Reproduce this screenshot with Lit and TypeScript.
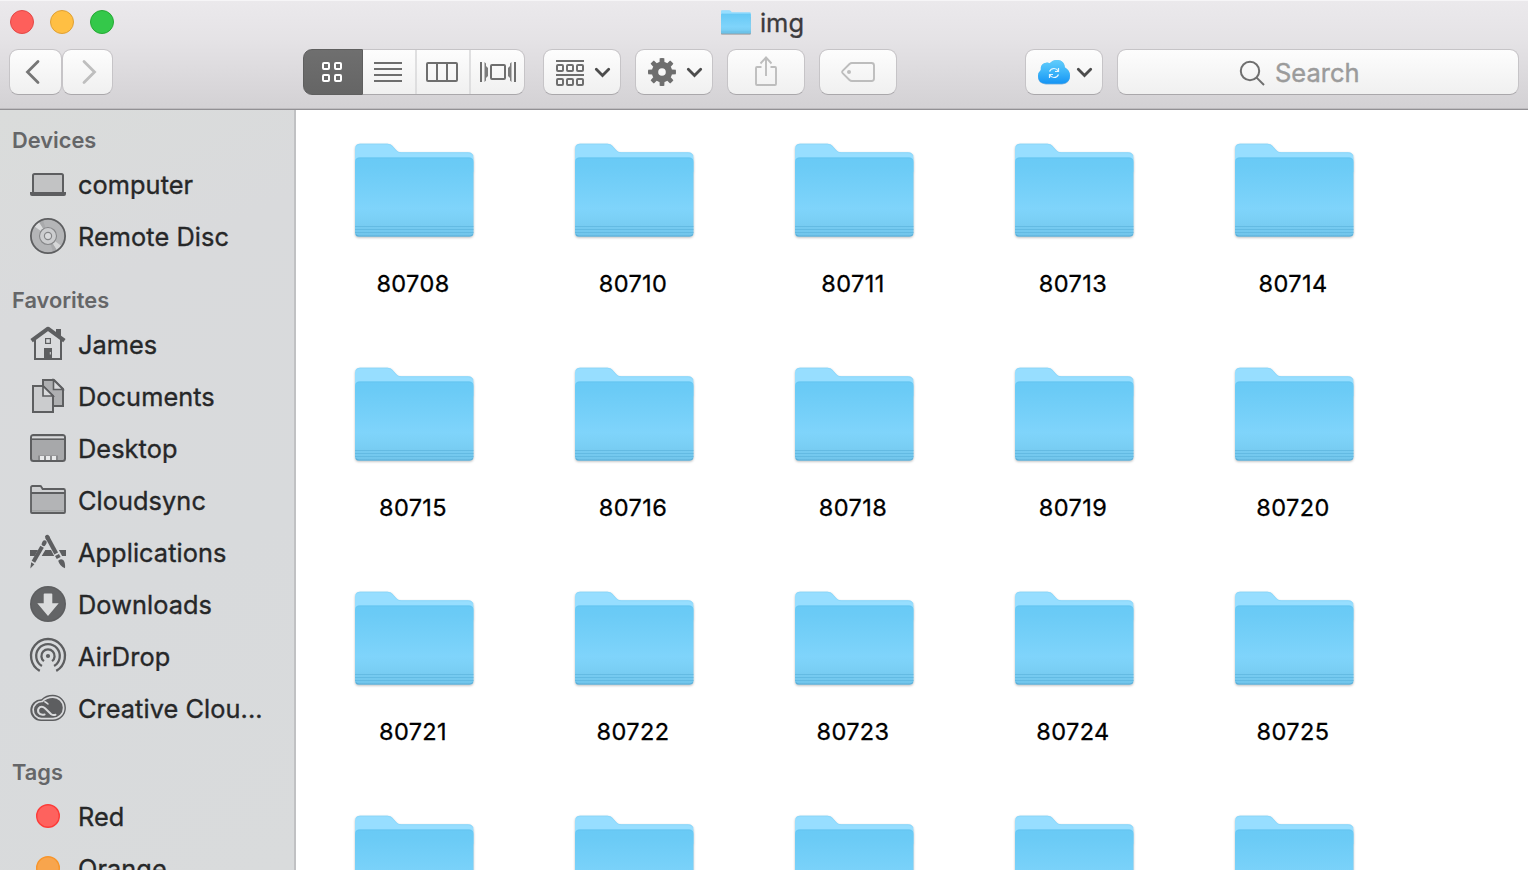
import { LitElement, html, css, svg, nothing, TemplateResult } from "lit";
import { customElement, property } from "lit/decorators.js";

const GREY = "#5d5e60";

const polar = (cx: number, cy: number, r: number, deg: number) => {
  const a = (deg * Math.PI) / 180;
  return `${(cx + r * Math.cos(a)).toFixed(2)} ${(cy + r * Math.sin(a)).toFixed(2)}`;
};

/** Arc centred on 20,20 that stays open at the bottom by `gap` degrees each side. */
const openArc = (r: number, gap: number) =>
  `M${polar(20, 20, r, 90 + gap)}A${r} ${r} 0 1 1 ${polar(20, 20, r, 90 - gap)}`;

const sideIcons: Record<string, TemplateResult> = {
  laptop: svg`
    <rect x="5" y="10" width="30" height="19" rx="1.5" fill="#c2c3c4" stroke=${GREY} stroke-width="2"/>
    <path d="M2 28H38V30Q38 32 36 32H4Q2 32 2 30Z" fill=${GREY}/>`,
  disc: svg`
    <circle cx="20" cy="20" r="17" fill="#b4b5b7"/>
    <path d="M20 20L6.500 10.500L11 6Z" fill="#dcddde"/><path d="M20 20L29 34.500L33.500 30Z" fill="#d6d7d8"/>
    <path d="M20 20L11 6L15 4Z" fill="#a9aaac"/><path d="M20 20L29 34.500L25 36Z" fill="#a9aaac"/>
    <circle cx="20" cy="20" r="17.1" fill="none" stroke=${GREY} stroke-width="1.8"/>
    <circle cx="20" cy="20" r="8.5" fill="#cccdcf" stroke="#858688" stroke-width="1.1"/>
    <circle cx="20" cy="20" r="3.6" fill="#d9dadc" stroke="#858688" stroke-width="1.2"/>`,
  home: svg`
    <path d="M28 5H33V15L28 11Z" fill=${GREY}/>
    <path d="M7 14V35H33V14" fill="none" stroke=${GREY} stroke-width="2"/>
    <path d="M3.600 16.600L20 4.700L36.400 16.600" fill="none" stroke=${GREY} stroke-width="4" stroke-linejoin="round"/>
    <rect x="17.6" y="14.6" width="4.8" height="4.8" fill="none" stroke=${GREY} stroke-width="1.2"/>
    <path d="M16 24H24V36H16Z" fill=${GREY}/><path d="M22.3 28V30.5" stroke="#d9dadc"/>`,
  documents: svg`
    <path d="M15 4H26L35 13V30H15Z" fill="#aeafb1" stroke=${GREY} stroke-width="2"/>
    <path d="M25.5 4V13.5H35Z" fill="#d9dadc" stroke=${GREY} stroke-width="1.6"/>
    <path d="M5 10H15L25 20V36H5Z" fill="#cbccce" stroke=${GREY} stroke-width="2"/>
    <path d="M15 10V20H25Z" fill="#d9dadc" stroke=${GREY} stroke-width="1.7"/>`,
  desktop: svg`
    <rect x="3" y="7" width="34" height="26" rx="2.5" fill="#a7a8aa" stroke=${GREY} stroke-width="2"/>
    <path d="M4 8.5H36V10.5H4Z" fill="#d9dadc"/><path d="M3 11.3H37" stroke=${GREY} stroke-width="1.6"/>
    <path d="M10 27.5H30V32H10Z" fill="#8a8b8d"/>
    <path d="M12 28H16V32H12ZM18 28H22V32H18ZM24 28H28V32H24Z" fill="#e8e9ea"/>`,
  folder: svg`
    <path d="M3 32.5V7.5Q3 6 4.5 6H12Q13 6 13.5 7L14.6 9H35.5Q37 9 37 10.5V32.5Z" fill="#cfd0d2"/>
    <path d="M3 13H37V33H3Z" fill="#b3b4b6"/><path d="M4 30.8H36" stroke="#9c9d9f"/>
    <path d="M3 32V7.5Q3 6 4.5 6H12Q13 6 13.5 7L14.6 9H35.5Q37 9 37 10.5V32Q37 33 36 33H4Q3 33 3 32ZM3 13H37" fill="none" stroke=${GREY} stroke-width="1.8"/>`,
  applications: svg`
    <path d="M2 18H10L6.600 24H2ZM17.300 18H23L26.200 24H13.700ZM30.900 18H38V24H34.100Z" fill=${GREY}/>
    <g fill="none" stroke=${GREY}>
      <path d="M19.200 5L19.800 6.100" stroke-width="4.300" stroke-linecap="round"/>
      <path d="M19.400 5.300L28.200 21.600" stroke-width="4.200"/>
      <path d="M29 23L30.700 26" stroke-width="4.500"/>
      <path d="M16.600 10.400L15.700 12" stroke-width="4.200" stroke-linecap="round"/>
      <path d="M14.100 14.800L5.400 29.800" stroke-width="4"/>
    </g>
    <path d="M30.200 28.800Q32.500 25.800 35.500 28.200Q37.500 31 37 36.300Q31.500 34 30.200 28.800Z" fill=${GREY}/>
    <path d="M3.200 30.200L6.400 32.200L2.300 36.500Z" fill=${GREY}/>`,
  downloads: svg`
    <circle cx="20" cy="20" r="18" fill=${GREY}/><circle cx="20" cy="20" r="16.500" fill="#636466"/>
    <path d="M16.500 9.500H23.500Q24.300 9.500 24.300 10.300V19.200H30.700L20 32L9.300 19.200H15.700V10.300Q15.700 9.500 16.500 9.500Z" fill="#dbdcdd"/>`,
  airdrop: svg`
    <g fill="none" stroke=${GREY} stroke-width="2.300">
      <path d=${openArc(17, 29)}/><path d=${openArc(11.800, 31)}/><path d=${openArc(6.600, 38)}/>
    </g><circle cx="20" cy="20" r="2.100" fill=${GREY}/>`,
  creative: svg`
    <path d="M13 33A10.900 10.900 0 0 1 13.400 11.200Q18 6.800 24.600 6.800A13.100 13.100 0 0 1 25 33Z" fill=${GREY}/>
    <g fill="none" stroke="#d9dadc" stroke-width="1.700" stroke-linecap="round" stroke-linejoin="round">
      <path d="M13.200 30.700A8.600 8.600 0 0 1 14.300 13.500Q18.500 9.100 24.700 9.100A10.800 10.800 0 0 1 25 30.700Z"/>
      <path d="M16.600 26.400Q12.200 27.400 10.400 24.500Q9.200 21 11.800 19.200Q14.400 17.800 17 20.200L23.200 26.300Q25 27.600 27.500 26.800" stroke-width="2"/>
      <path d="M16.800 13.800Q18.600 14.600 20 16" stroke-width="1.500"/>
    </g>`,
  red: svg`<circle cx="20" cy="20" r="11.300" fill="#fe625e" stroke="#fc3c39" stroke-width="1.400"/>`,
  orange: svg`<circle cx="20" cy="20" r="11.300" fill="#f8a54d" stroke="#f8952a" stroke-width="1.400"/>`,
};

const chevron = (x: number) => svg`
  <path d="M${x} 69.300L${x + 6.200} 75.500L${x + 12.400} 69.300" fill="none" stroke="#4c4c4c" stroke-width="2.800" stroke-linecap="round"/>`;

const cells = (xs: number[], ys: number[]) =>
  ys.map((y) => xs.map((x) => svg`<rect x=${x} y=${y} width="6" height="6" rx="1"/>`));

const gearPath = () => {
  let d = "";
  for (let i = 0; i < 8; i++) {
    const a = i * 45 - 90;
    d += `${i ? "L" : "M"}${polar(662, 72, 10.200, a - 14)}L${polar(662, 72, 14, a - 9.500)}A14 14 0 0 1 ${polar(662, 72, 14, a + 9.500)}L${polar(662, 72, 10.200, a + 14)}A10.200 10.200 0 0 1 ${polar(662, 72, 10.200, a + 31)}`;
  }
  return d + "ZM665.800 72A3.800 3.800 0 1 0 658.200 72A3.800 3.800 0 1 0 665.800 72Z";
};

const folderArt = () => svg`
  <defs>
    <linearGradient id="front" x1="0" y1="0" x2="0" y2="1">
      <stop offset="0" stop-color="#69caf6"/><stop offset=".12" stop-color="#6bcbf6"/>
      <stop offset=".65" stop-color="#7fd4fb"/><stop offset=".8" stop-color="#7acff5"/><stop offset="1" stop-color="#71c5eb"/>
    </linearGradient>
  </defs>
  <path d="M1 7Q1 1.700 6 1.700H33.500Q37 1.700 39.500 5L42.500 8.500Q44 10.300 47 10.300H114Q119.500 10.300 119.500 16V30H1Z" fill="#97deff"/>
  <path d="M2 4.500Q3 2.200 6 2.200H33.500Q37 2.200 39.500 5.500L42.500 9Q44 10.800 47 10.800H114Q118 10.800 119 13.500" fill="none" stroke="#8ad6f9" stroke-width=".8"/>
  <path d="M1 20Q1 15.500 5 15.500H115.500Q119.500 15.500 119.500 20V90.500Q119.500 94.500 116 94.500H4.500Q1 94.500 1 90.500Z" fill="url(#front)"/>
  <path d="M2 18Q3 16 5.500 16H115Q117.500 16 118.500 18" fill="none" stroke="#66c4f0" stroke-width=".8"/>
  <path d="M1 84.500H119.500M1 87.500H119.500M1 90.500H119.500" stroke="#5eb6df" stroke-width="1" opacity=".75"/>
  <path d="M2 92.500Q2.500 94 5 94H115.500Q118 94 118.700 92.500" fill="none" stroke="#5aaed8" stroke-width="1.100"/>`;

@customElement("finder-folder")
export class FinderFolder extends LitElement {
  @property() name = "";
  static styles = css`
    :host { display: flex; flex-direction: column; align-items: center; width: 220px; height: 224px; }
    .art { width: 121px; height: 97px; display: block; margin-top: 1px; overflow: visible; filter: drop-shadow(0 1px 1px rgba(0, 0, 0, 0.25)); }
    .name { margin-top: 30px; padding-right: 2px; font-size: 23.5px; line-height: 30px; color: #000; letter-spacing: 0.4px; -webkit-text-stroke: 0.3px #000; }
  `;
  render() {
    return html`<svg class="art" viewBox="0 0 121 97">${folderArt()}</svg>${this.name ? html`<div class="name">${this.name}</div>` : nothing}`;
  }
}

interface Item { label: string; icon: string; }
const sections: { title: string; items: Item[] }[] = [
  { title: "Devices", items: [{ label: "computer", icon: "laptop" }, { label: "Remote Disc", icon: "disc" }] },
  {
    title: "Favorites",
    items: [
      { label: "James", icon: "home" }, { label: "Documents", icon: "documents" },
      { label: "Desktop", icon: "desktop" }, { label: "Cloudsync", icon: "folder" },
      { label: "Applications", icon: "applications" }, { label: "Downloads", icon: "downloads" },
      { label: "AirDrop", icon: "airdrop" }, { label: "Creative Clou...", icon: "creative" },
    ],
  },
  { title: "Tags", items: [{ label: "Red", icon: "red" }, { label: "Orange", icon: "orange" }] },
];

const folders = [
  "80708", "80710", "80711", "80713", "80714",
  "80715", "80716", "80718", "80719", "80720",
  "80721", "80722", "80723", "80724", "80725",
  "", "", "", "", "",
];

@customElement("app-root")
export class AppRoot extends LitElement {
  static styles = css`
    :host { display: flex; flex-direction: column; width: 1528px; height: 870px; overflow: hidden; background: #fff; font-family: Inter, "Liberation Sans", sans-serif; }
    * { box-sizing: border-box; }
    svg { display: block; flex: none; }
    .chrome { flex: none; height: 110px; background: linear-gradient(#ebe9ec, #e5e3e6 35%, #d3d1d4); border-top: 1px solid #f6f5f7; border-bottom: 1px solid #929094; box-shadow: inset 0 -1px #bebcbf; }
    .titlebar { height: 48px; display: grid; grid-template-columns: 1fr auto 1fr; }
    .lights { display: flex; gap: 16px; padding: 9px 0 0 10px; }
    .light { width: 24px; height: 24px; border-radius: 50%; border: 1px solid; }
    .close { background: #fe5f5b; border-color: #e34846; }
    .minimise { background: #ffbf43; border-color: #dfa035; }
    .zoom { background: #34c84a; border-color: #26a934; }
    .title { display: flex; padding: 8px 3px 0 0; gap: 9px; }
    .title-art { width: 30px; height: 24px; margin-top: 1px; filter: drop-shadow(0 1px 0.5px rgba(0, 0, 0, 0.3)); }
    .title-text { font-size: 25.5px; line-height: 28px; color: #3c3b3d; -webkit-text-stroke: 0.3px #3c3b3d; }
    .toolbar { display: flex; padding-left: 9px; }
    .button { width: 78px; height: 46px; border: 1px solid #c6c4c7; border-bottom-color: #aaa8ab; border-radius: 9px; background: linear-gradient(#fdfdfd, #f0f0f0); background-clip: padding-box; display: flex; overflow: hidden; }
    .back { width: 53px; }
    .forward { width: 51px; }
    .segments { display: flex; margin-left: 190px; margin-right: 18px; }
    .selected { width: 60px; height: 46px; border: 1px solid #5f5f5f; border-radius: 9px 0 0 9px; background: linear-gradient(#6f6f6f, #656565); }
    .views { width: 162px; border-left: 0; border-radius: 0 9px 9px 0; }
    .actions { display: flex; gap: 14px; }
    .cloud { margin-left: 128px; }
    .search { width: 402px; margin-left: 14px; }
    .search-label { font-size: 25.5px; line-height: 45px; color: #9b9b9b; margin-left: 8px; -webkit-text-stroke: 0.4px #9b9b9b; }
    .body { flex: 1; display: flex; min-height: 0; overflow: hidden; }
    .sidebar { width: 296px; flex: none; border-right: 2px solid #c0c1c3; background: linear-gradient(155deg, #dadcdb, #d9dadc 25%, #d8dadc 60%, #d9dbdc); padding-top: 11px; }
    .section { margin-bottom: 18px; }
    .heading { height: 38px; line-height: 39px; padding-left: 12px; font-size: 21.8px; font-weight: 600; color: #656668; }
    .row { height: 52px; display: flex; align-items: center; padding: 0 0 0 28px; gap: 10px; }
    .row-icon { width: 40px; height: 40px; margin-bottom: 2px; }
    .row-label { font-size: 25.3px; line-height: 52px; color: #262728; white-space: pre; letter-spacing: 0.08px; -webkit-text-stroke: 0.35px #262728; }
    .files { flex: 1; display: grid; grid-template-columns: repeat(5, 220px); grid-auto-rows: 224px; padding: 31px 0 0 8px; align-content: start; }
  `;

  render() {
    return html`
      <header class="chrome">
        <div class="titlebar">
          <div class="lights"><div class="light close"></div><div class="light minimise"></div><div class="light zoom"></div></div>
          <div class="title"><svg class="title-art" viewBox="1 1 119 95" preserveAspectRatio="none">${folderArt()}</svg><span class="title-text">img</span></div>
        </div>
        <div class="toolbar">
          <div class="button back"><svg width="51" height="44" viewBox="10 50 51 44"><path d="M38 61.500L27.500 72L38 82.500" fill="none" stroke="#767676" stroke-width="2.800" stroke-linecap="round"/></svg></div>
          <div class="button forward"><svg width="49" height="44" viewBox="63 50 49 44"><path d="M84 61.500L94.500 72L84 82.500" fill="none" stroke="#bebebe" stroke-width="2.800" stroke-linecap="round"/></svg></div>
          <div class="segments">
            <div class="selected"><svg width="58" height="44" viewBox="304 50 58 44"><g fill="none" stroke="#fff" stroke-width="2">${cells([323, 335], [63, 75])}</g></svg></div>
            <div class="button views">
              <svg width="161" height="44" viewBox="363 50 161 44">
                <path d="M416 50V94M470 50V94" stroke="#d9d9da" stroke-width="1.600"/>
                <g fill="none" stroke="#6e6e6e" stroke-width="2">
                  <path d="M374 63H402M374 69H402M374 75H402M374 81H402"/>
                  <rect x="427" y="63" width="30" height="18" rx="1"/><path d="M437 63V81M447 63V81"/>
                  <path d="M481 62V82M515 62V82"/><rect x="491" y="65" width="14" height="14" rx="1"/>
                </g>
                <path d="M484.500 62L486 63.500V66L488 68V76L486 78V80.500L484.500 82ZM511.500 62L510 63.500V66L508 68V76L510 78V80.500L511.500 82Z" fill="#7c7c7c"/>
              </svg>
            </div>
          </div>
          <div class="actions">
            <div class="button"><svg width="76" height="44" viewBox="544 50 76 44">
              <g fill="none" stroke="#6e6e6e" stroke-width="2"><path d="M556 61H584M556 75H584"/>${cells([557, 567, 577], [65, 79])}</g>${chevron(596.3)}
            </svg></div>
            <div class="button"><svg width="76" height="44" viewBox="636 50 76 44"><path d=${gearPath()} fill="#6e6e6e" fill-rule="evenodd"/>${chevron(688.3)}</svg></div>
            <div class="button"><svg width="76" height="44" viewBox="728 50 76 44">
              <path d="M761.500 67H757Q756 67 756 68V84Q756 85 757 85H775Q776 85 776 84V68Q776 67 775 67H770.500M766 76V57.500M760.500 63.500L766 57.500L771.500 63.500" fill="none" stroke="#bdbdbd" stroke-width="1.900"/>
            </svg></div>
            <div class="button"><svg width="76" height="44" viewBox="820 50 76 44">
              <path d="M852 63H871.500Q874 63 874 65.500V78.500Q874 81 871.500 81H852Q850.500 81 849.500 80L842.600 73.200Q841.500 72 842.600 70.800L849.500 64Q850.500 63 852 63Z" fill="none" stroke="#bdbdbd" stroke-width="1.900"/><circle cx="849" cy="72" r="2" fill="#bdbdbd"/>
            </svg></div>
          </div>
          <div class="button cloud"><svg width="76" height="44" viewBox="1026 50 76 44">
            <defs><linearGradient id="sky" x1="0" y1="0" x2="0" y2="1"><stop offset="0" stop-color="#63cdfb"/><stop offset=".5" stop-color="#3db5f9"/><stop offset="1" stop-color="#1594f4"/></linearGradient></defs>
            <path d="M1046 84.500Q1038 84 1038 76.500Q1038.200 72.500 1040.800 70.200Q1040 63.500 1047 62.800Q1048.500 62.700 1049.700 63.500Q1053 59.500 1058 60Q1064.500 61 1064.800 67.500Q1070 70.500 1070 76Q1070 83.700 1062 84.500Z" fill="#1679c4" opacity=".5"/>
            <path d="M1046 83.700Q1038 83.400 1038 76Q1038.200 72 1040.800 70Q1040 63.300 1047 62.600Q1048.500 62.500 1049.700 63.300Q1053 59.300 1058 60Q1064.500 61 1064.800 67.200Q1070 70.200 1070 75.500Q1070 83.200 1062 83.700Z" fill="url(#sky)"/>
            <path d="M1049.500 71.500Q1050.800 68.500 1054 68.500Q1056.700 68.500 1058.200 71M1058.500 68V71.500H1055M1058.500 74.500Q1057.200 77.500 1054 77.500Q1051.300 77.500 1049.800 75M1049.500 78V74.500H1053" fill="none" stroke="#e8f7ff" stroke-width="1.200"/>
            ${chevron(1078.3)}
          </svg></div>
          <div class="button search">
            <svg width="149" height="44" viewBox="1118 50 149 44"><g fill="none" stroke="#6f6f6f" stroke-width="2"><circle cx="1250" cy="71" r="9.200"/><path d="M1256.600 77.600L1264 85"/></g></svg>
            <span class="search-label">Search</span>
          </div>
        </div>
      </header>
      <main class="body">
        <nav class="sidebar">
          ${sections.map((s) => html`<div class="section"><div class="heading">${s.title}</div>
            ${s.items.map((i) => html`<div class="row"><svg class="row-icon" viewBox="0 0 40 40">${sideIcons[i.icon]}</svg><span class="row-label">${i.label}</span></div>`)}
          </div>`)}
        </nav>
        <div class="files">${folders.map((f) => html`<finder-folder .name=${f}></finder-folder>`)}</div>
      </main>`;
  }
}
